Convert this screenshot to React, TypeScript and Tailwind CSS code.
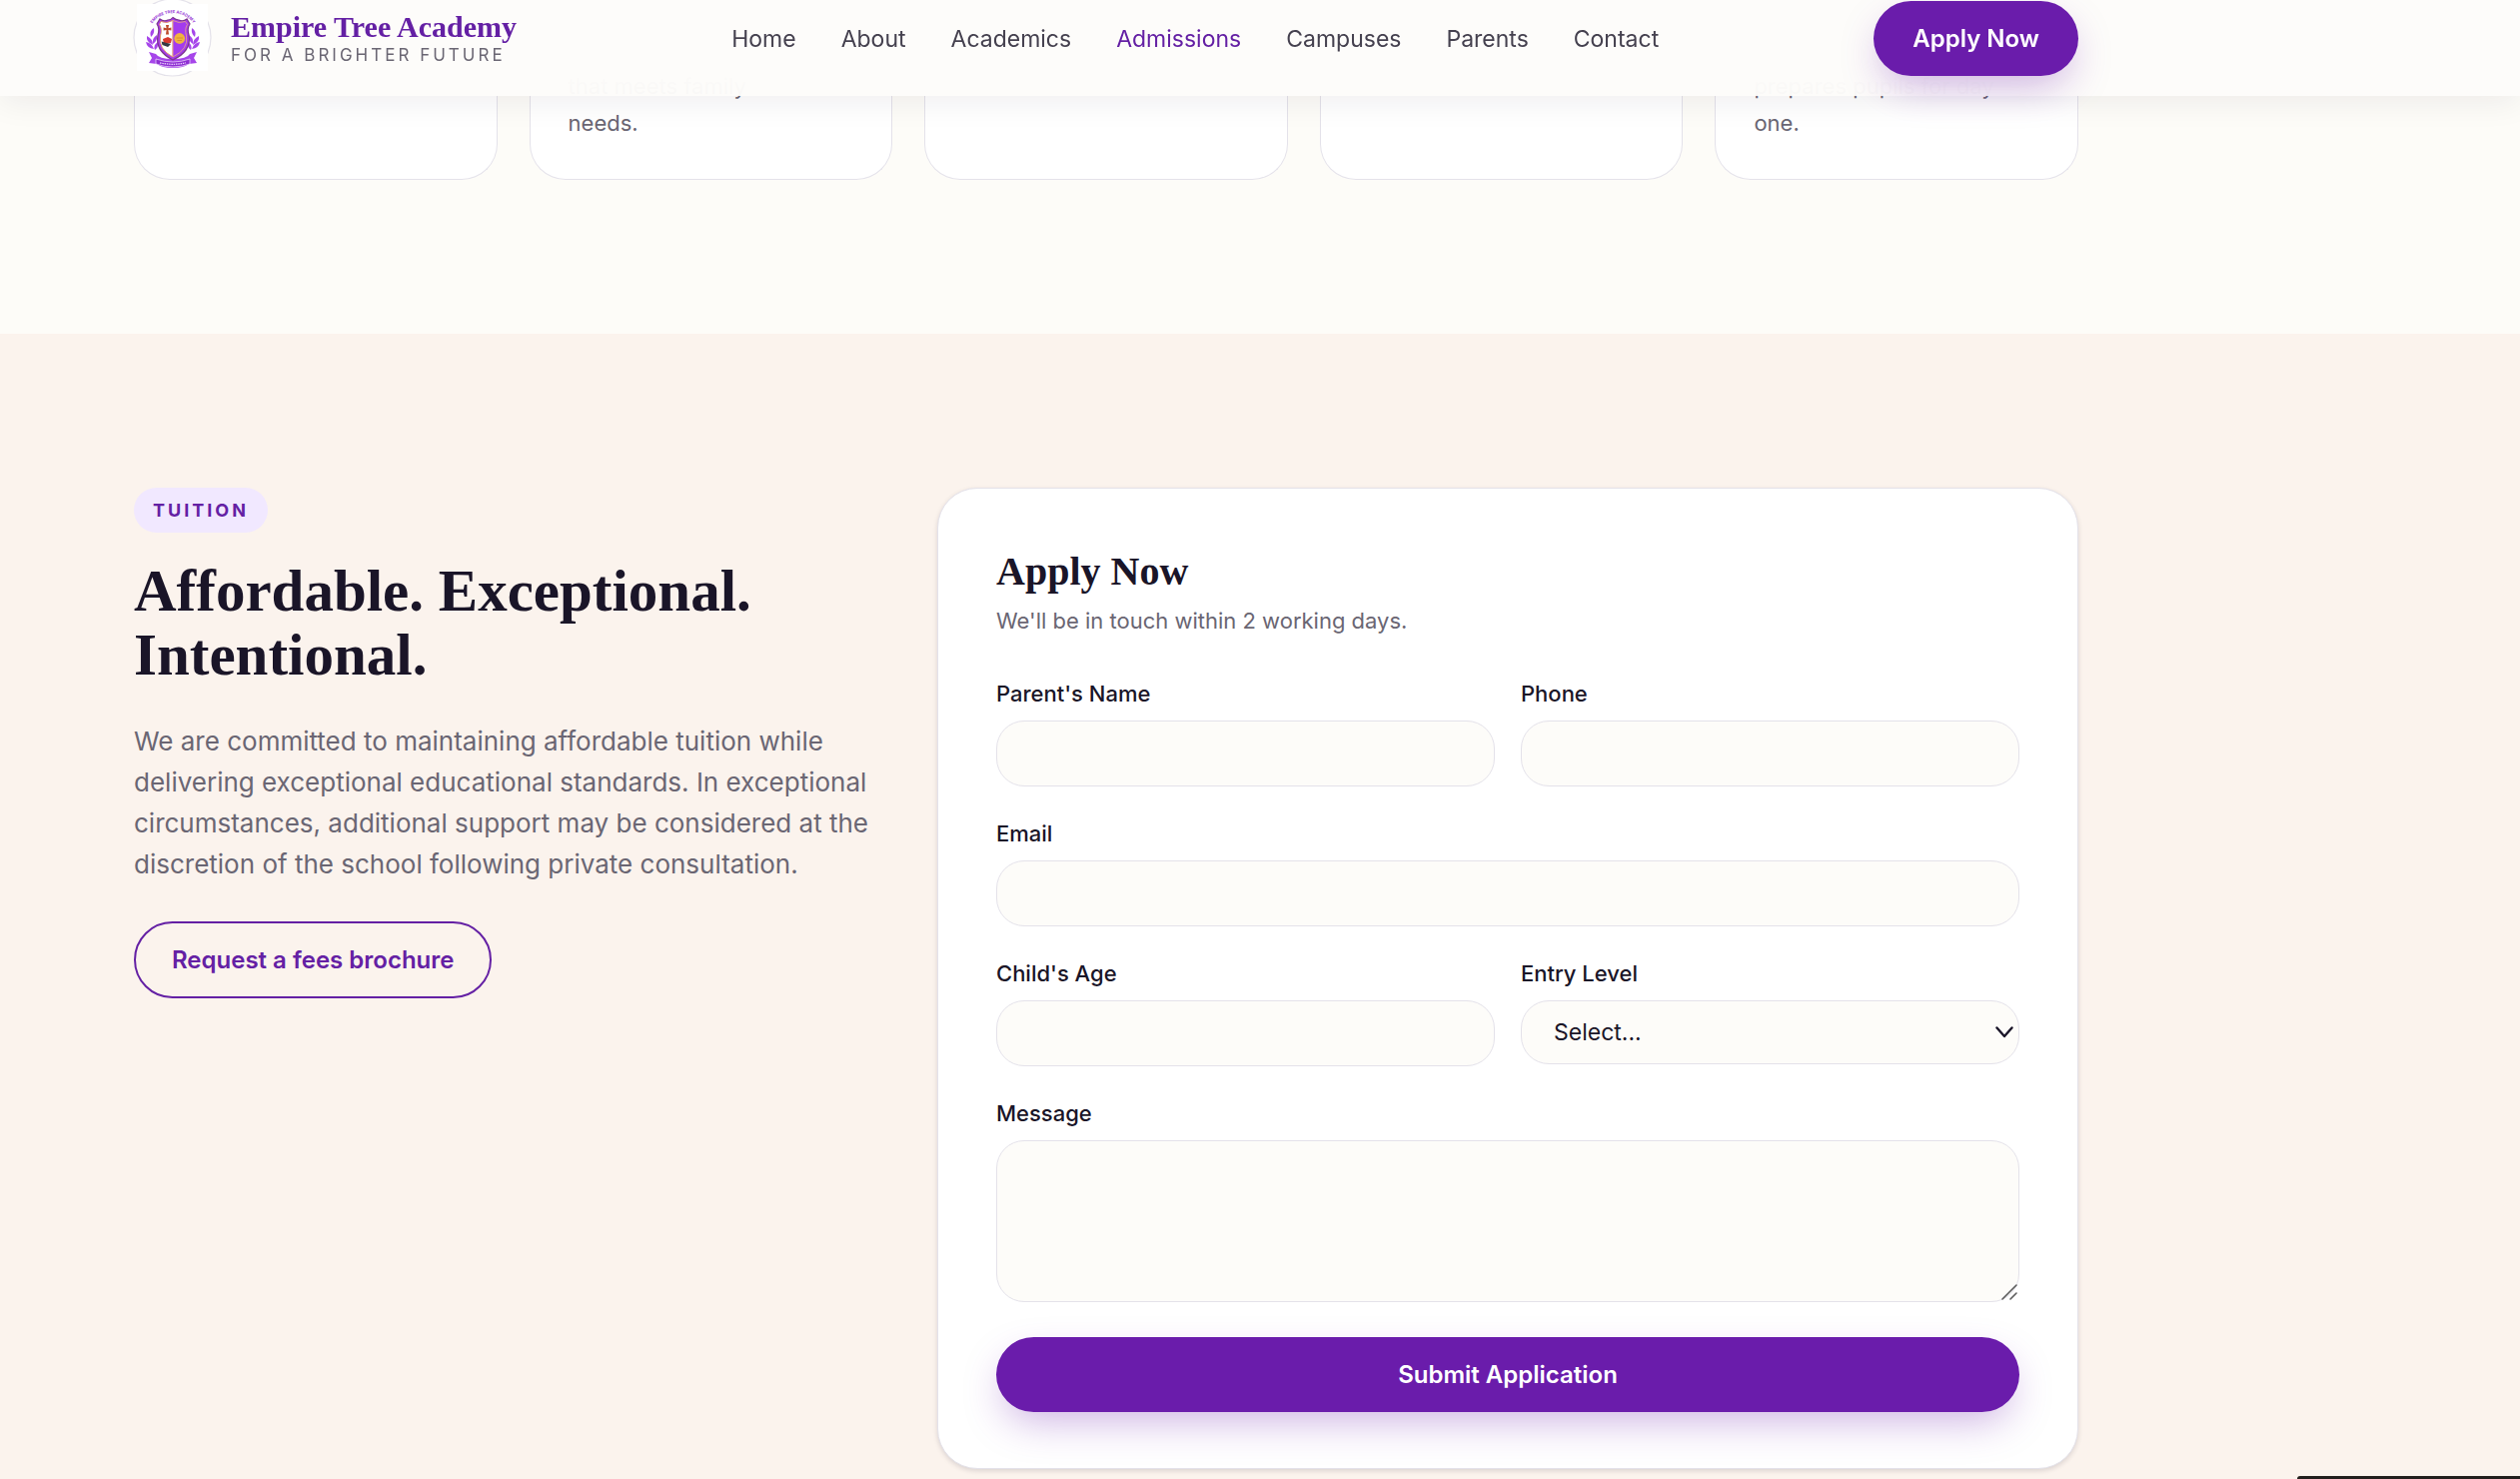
import { useState } from "react";

const navLinks = ["Home", "About", "Academics", "Admissions", "Campuses", "Parents", "Contact"];

const steps = [
    "",
    "that meets family\nneeds.",
    "",
    "",
    "prepares pupils for day\none.",
];

const inputClass =
    "block w-full h-[66px] rounded-[28px] border border-[#e4e2ea] bg-[#fdfcf9] px-8 text-[22px] text-[#1a1528] outline-none focus:border-[#6a1cab]";
const labelClass = "block mb-[10px] text-[22px] leading-[34px] font-medium text-[#1a1528]";

function Laurel() {
    return (
        <g fill="#a646ea">
            <path d="M24 29 q-5 3 -3 9 q4 -3 3 -9z" />
            <path d="M17 37 q-1 6 6 9 q0 -6 -6 -9z" />
            <path d="M27 36 q-5 3 -4 9 q5 -3 4 -9z" />
            <path d="M16 43 q1 6 8 7 q-2 -6 -8 -7z" />
            <path d="M28 43 q-5 3 -3 8 q4 -3 3 -8z" />
        </g>
    );
}

function Crest() {
    return (
        <svg viewBox="0 0 84 80" className="h-20 w-[84px]" aria-hidden="true">
            <circle cx="42.5" cy="38.5" r="38.5" fill="#fff" stroke="#e4e2ea" strokeWidth="1.2" />
            <rect x="7" y="5" width="71" height="67" fill="#fff" />
            <defs>
                <path id="crest-arc" d="M20 28 A 26 26 0 0 1 66 28" />
            </defs>
            <text fontSize="4" fontWeight="700" fill="#9a3bd6" fontFamily="Inter, sans-serif" textAnchor="middle">
                <textPath href="#crest-arc" startOffset="50%">EMPIRE TREE ACADEMY</textPath>
            </text>
            <Laurel />
            <g transform="translate(86 0) scale(-1 1)">
                <Laurel />
            </g>
            {/* ribbon */}
            <path d="M19 53 l7 2 q3 5 17 5 q14 0 17 -5 l7 -2 l-3 6 l3 5 l-8 1 q-5 4 -16 4 q-11 0 -16 -4 l-8 -1 l3 -5z" fill="#a646ea" />
            <path d="M26 60 q17 6 34 0 l0 5 q-17 6 -34 0z" fill="#8f2fd3" stroke="#fff" strokeWidth="0.6" />
            <path d="M30 63.800 q13 3 26 0" fill="none" stroke="#e9d3fa" strokeWidth="1.2" strokeDasharray="1.500 0.8" />
            {/* shield */}
            <path d="M30 20 Q34 23 38 21 Q41 21 43 18.500 Q46 21 49 21 Q53 23 57 20 L60 25 Q57 29 59 36 Q62 52 43 61 Q25 52 28 36 Q30 29 27 25 Z" fill="#a63bea" stroke="#7c3690" strokeWidth="1.2" />
            <path d="M43 21.500 Q37 25 31 22.500 L29.500 25.500 Q32.500 30 30.500 37 Q28 50 43 58 Z" fill="#fff" stroke="#e2915c" strokeWidth="0.9" />
            <path d="M43 21.500 Q49 25 55.500 22.500 L57.500 25.500 Q54.500 30 56.500 37 Q59 50 43 58 Z" fill="#a33bee" stroke="#e2a08c" strokeWidth="0.9" />
            <path d="M36 26h3l-.6 3.200 3-.6v3l-3-.6.6 4.500h-3l.6-4.500-3 .6v-3l3 .6z" fill="#bd4a2b" />
            <path d="M33 40l5-2 4 2-1 4-7 1z" fill="#d8392e" />
            <path d="M31.500 42.500l5.500 1.500 4 1-3 3-5.500-2z" fill="#343a44" />
            <circle cx="49.700" cy="39.500" r="5.400" fill="#f0b43f" />
            <path d="M46.500 39h6.500M47.500 41.500h4.500" stroke="#d4862f" strokeWidth="0.8" />
        </svg>
    );
}

function Header() {
    return (
        <header className="fixed inset-x-0 top-0 z-50 h-24 bg-[#fdfcfa]/95 shadow-[0_6px_32px_rgba(30,20,40,0.07)] backdrop-blur-xl">
            <div className="ml-[130px] flex h-[77px] max-w-[1950px] items-center justify-between">
                <a href="#home" className="flex items-center gap-[17px]">
                    <Crest />
                    <span className="block">
                        <span className="block font-['Liberation_Serif',serif] text-[30px] leading-8 font-bold text-[#6420a4]">Empire Tree Academy</span>
                        <span className="block text-[17px] leading-6 tracking-[3px] text-[#6a6673]">FOR A BRIGHTER FUTURE</span>
                    </span>
                </a>
                <nav className="flex gap-[45px] pt-0.5">
                    {navLinks.map((link) => (
                        <a
                            key={link}
                            href={"#" + link.toLowerCase()}
                            className={link === "Admissions" ? "text-[23px] text-[#6420a4]" : "text-[23px] text-[#45414f]"}
                        >
                            {link}
                        </a>
                    ))}
                </nav>
                <button className="h-[75px] rounded-full bg-[#6a1cab] px-[39px] text-[24px] font-semibold text-white shadow-[0_16px_40px_-8px_rgba(106,28,171,0.35)]">
                    Apply Now
                </button>
            </div>
        </header>
    );
}

function ApplyForm() {
    const [level, setLevel] = useState("");

    return (
        <form
            onSubmit={(e) => e.preventDefault()}
            className="col-span-3 rounded-[40px] border border-[#e4e2ea] bg-white px-[58px] pt-[58px] pb-14 shadow-[0_2px_5px_rgba(30,20,40,0.14)]"
        >
            <h3 className="font-['Liberation_Serif',serif] text-[40px] leading-[50px] font-bold text-[#1a1528]">Apply Now</h3>
            <p className="mt-[6px] text-[22px] leading-9 text-[#6a6673]">We'll be in touch within 2 working days.</p>
            <div className="mt-[38px] grid grid-cols-2 gap-x-[26px] gap-y-[30px]">
                <div>
                    <label htmlFor="parent" className={labelClass}>Parent's Name</label>
                    <input id="parent" type="text" className={inputClass} />
                </div>
                <div>
                    <label htmlFor="phone" className={labelClass}>Phone</label>
                    <input id="phone" type="tel" className={inputClass} />
                </div>
                <div className="col-span-2">
                    <label htmlFor="email" className={labelClass}>Email</label>
                    <input id="email" type="email" className={inputClass} />
                </div>
                <div>
                    <label htmlFor="age" className={labelClass}>Child's Age</label>
                    <input id="age" type="text" className={inputClass} />
                </div>
                <div>
                    <label htmlFor="level" className={labelClass}>Entry Level</label>
                    <div className="relative">
                        <select
                            id="level"
                            value={level}
                            onChange={(e) => setLevel(e.target.value)}
                            className="block h-16 w-full appearance-none rounded-[28px] border border-[#e4e2ea] bg-[#fdfcf9] px-8 text-[23px] text-[#1a1528] outline-none"
                        >
                            <option value="">Select...</option>
                        </select>
                        <svg viewBox="0 0 18 12" className="pointer-events-none absolute top-[26px] right-[6px] h-3 w-[18px]" fill="none" stroke="#1a1528" strokeWidth="2.400" strokeLinecap="round" strokeLinejoin="round">
                            <path d="M1.500 1.500 L9 10 L16.500 1.500" />
                        </svg>
                    </div>
                </div>
                <div className="relative col-span-2">
                    <label htmlFor="message" className={labelClass}>Message</label>
                    <textarea id="message" className="block h-[162px] w-full resize-none rounded-[28px] border border-[#e4e2ea] bg-[#fdfcf9] px-8 py-4 text-[22px] text-[#1a1528] outline-none" />
                    <svg viewBox="0 0 16 16" className="pointer-events-none absolute right-[2px] bottom-[2px] h-4 w-4" stroke="#5c5c5c" strokeWidth="1.600" strokeLinecap="round">
                        <path d="M1 15 L15 1 M9 15 L15 9" />
                    </svg>
                </div>
            </div>
            <button type="submit" className="mt-[35px] h-[75px] w-full rounded-full bg-[#6a1cab] text-[24px] font-semibold text-white shadow-[0_16px_40px_-8px_rgba(106,28,171,0.35)]">
                Submit Application
            </button>
        </form>
    );
}

export default function App() {
    return (
        <div className="min-h-screen overflow-hidden bg-[#fbf3ed] font-['Inter',sans-serif]">
            <Header />
            <section className="bg-[#fdfcf8] pb-[154px]">
                <div className="ml-[134px] grid max-w-[1946px] grid-cols-5 gap-8">
                    {steps.map((text, i) => (
                        <div key={i} className="h-[180px] rounded-b-[36px] border border-t-0 border-[#e4e2ea] bg-white px-[38px] pt-[68px]">
                            <p className="text-[22px] leading-[37px] whitespace-pre-line text-[#6a6673]">{text}</p>
                        </div>
                    ))}
                </div>
            </section>
            <section className="pt-[154px] pb-10">
                <div className="ml-[134px] grid max-w-[1946px] grid-cols-5 items-start gap-16">
                    <div className="col-span-2">
                        <span className="inline-block rounded-full bg-[#f1e8ff] px-[19px] text-[18px] leading-[45px] font-bold tracking-[3px] text-[#6420a4]">TUITION</span>
                        <h2 className="mt-[26px] font-['Liberation_Serif',serif] text-[59px] leading-16 font-bold text-[#1a1528]">
                            Affordable. Exceptional. Intentional.
                        </h2>
                        <p className="mt-[34px] text-[26px] leading-[41px] text-[#6a6673]">
                            We are committed to maintaining affordable tuition while delivering exceptional educational standards. In exceptional circumstances, additional support may be considered at the discretion of the school following private consultation.
                        </p>
                        <button className="mt-[37px] h-[77px] rounded-full border-2 border-[#6420a4] px-9 text-[24px] font-semibold text-[#6420a4]">
                            Request a fees brochure
                        </button>
                    </div>
                    <ApplyForm />
                </div>
            </section>
            <div className="fixed right-0 bottom-0 h-[3px] w-[223px] rounded-tl-sm bg-[#221e1c]" />
        </div>
    );
}
